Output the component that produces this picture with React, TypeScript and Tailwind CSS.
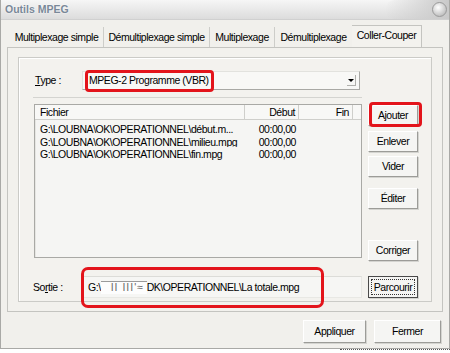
import React from 'react';

const font = "font-['Liberation_Sans',Arial,sans-serif]";

const tabs = [
  { label: 'Multiplexage simple', w: 'w-[94px]' },
  { label: 'Démultiplexage simple', w: 'w-[106px]' },
  { label: 'Multiplexage', w: 'w-[65px]' },
  { label: 'Démultiplexage', w: 'w-[77px]' },
];

const files = [
  { name: 'G:\\LOUBNA\\OK\\OPERATIONNEL\\début.m...', start: '00:00,00' },
  { name: 'G:\\LOUBNA\\OK\\OPERATIONNEL\\milieu.mpg', start: '00:00,00' },
  { name: 'G:\\LOUBNA\\OK\\OPERATIONNEL\\fin.mpg', start: '00:00,00' },
];

const Btn = ({ label, className = '' }: { label: React.ReactNode; className?: string }) => (
  <div
    className={`relative h-[21px] w-[50px] flex items-center justify-center bg-[#f5f5f3] border border-t-white border-l-white border-b-[#9c9c98] border-r-[#9c9c98] shadow-[1px_1px_0_#d4d4d0] ${className}`}
  >
    {label}
  </div>
);

const RedBox = ({ className }: { className: string }) => (
  <div className={`absolute border-[3px] border-[#e3141b] pointer-events-none ${className}`} />
);

export default function App() {
  return (
    <div className={`w-[450px] h-[353px] bg-white overflow-hidden text-[10.5px] tracking-[-0.45px] leading-none text-black whitespace-nowrap ${font}`}>
      <div className="h-[349px] flex flex-col bg-[#f1f0ec] border-x border-b border-[#a9a9a6]">
        {/* title bar */}
        <div className="h-[20px] flex items-center justify-between pl-[4px] bg-gradient-to-b from-[#f6f6f6] to-[#dcdcdc] border-b border-[#d0d0d0]">
          <span className="font-bold text-[10.5px] tracking-normal text-[#7a8898] [text-shadow:0_0_2px_#ffffff]">
            Outils MPEG
          </span>
          <div className="h-full w-[64px] flex items-center justify-end pr-[2px] rounded-l-full bg-gradient-to-r from-transparent to-[#c9c9c9]">
            <div className="w-[15px] h-[15px] rounded-full border border-[#9a9a9a] bg-[radial-gradient(circle_at_40%_35%,#ffffff,#c4c4c4_70%,#a8a8a8)]" />
          </div>
        </div>

        <div className="flex-1 px-[6px] pt-[7px]">
          {/* tabs */}
          <div className="flex h-[20px] pl-[3px]">
            {tabs.map((t, i) => (
              <div
                key={t.label}
                className={`${t.w} h-full flex items-center justify-center ${i < 3 ? 'border-r border-[#cdcdc9]' : ''}`}
              >
                {t.label}
              </div>
            ))}
            <div className="w-[70px] h-[22px] -mt-[2px] flex items-center justify-center pb-[2px] bg-[#f3f2ee] border-r border-t border-[#c4c4c0] relative z-10">
              Coller-Couper
            </div>
          </div>

          {/* tab panel */}
          <div className="h-[265px] border border-[#c4c4c0] bg-[#f2f1ed] pt-[9px] px-[10px]">
            <div className="h-[245px] border border-[#cbcbc7] shadow-[inset_1px_1px_0_#ffffff] bg-[#f3f2ee]">
              {/* type */}
              <div className="flex items-center h-[19px] mt-[13px] pl-[16px]">
                <div className="w-[47px]">
                  <span className="underline">T</span>ype :
                </div>
                <div className="relative w-[278px] h-[19px] flex items-center justify-between bg-[#f8f8f6] border border-t-[#e2e2de] border-l-[#e2e2de] border-r-[#a9a9a5] border-b-[#a9a9a5] pl-[6px] pr-[3px]">
                  <span>MPEG-2 Programme (VBR)</span>
                  <div className="w-[9px] h-[11px] flex items-center justify-center border-r border-b border-[#b0b0ac]">
                    <div className="w-0 h-0 border-l-[3px] border-r-[3px] border-t-[3px] border-l-transparent border-r-transparent border-t-black" />
                  </div>
                  <RedBox className="left-[2px] -top-[2px] w-[129px] h-[22px] rounded-[4px]" />
                </div>
              </div>

              <div className="mt-[7px] ml-[14px] w-[329px] h-px bg-[#d4d4d0]" />

              {/* list + buttons */}
              <div className="flex items-start h-[154px] mt-[6px] pl-[15px]">
                <div className="w-[328px] h-[154px] border border-[#a9a9a5] bg-[#f5f5f3] shadow-[inset_1px_1px_0_#e6e6e2]">
                  <div className="flex h-[15px] border-b border-[#cfcfcb] bg-[#f8f8f6]">
                    <div className="w-[210px] pl-[5px] flex items-center border-r border-[#cfcfcb]">Fichier</div>
                    <div className="w-[54px] pr-[3px] flex items-center justify-end border-r border-[#cfcfcb]">Début</div>
                    <div className="w-[54px] pr-[3px] flex items-center justify-end border-r border-[#cfcfcb]">Fin</div>
                  </div>
                  <div className="mt-[3px]">
                    {files.map((f) => (
                      <div key={f.name} className="flex h-[12.5px] items-center">
                        <div className="w-[210px] pl-[5px] overflow-hidden">{f.name}</div>
                        <div className="w-[54px] pr-[3px] text-right">{f.start}</div>
                      </div>
                    ))}
                  </div>
                </div>
                <div className="ml-[6px] flex flex-col">
                  <div className="relative mt-[1px]">
                    <Btn label="Ajouter" />
                    <RedBox className="left-[1px] -top-[3px] w-[53px] h-[25px] rounded-[4px]" />
                  </div>
                  <Btn label="Enlever" className="mt-[5px]" />
                  <Btn label="Vider" className="mt-[4px]" />
                  <Btn label="Éditer" className="mt-[11px]" />
                  <Btn label="Corriger" className="mt-[31px]" />
                </div>
              </div>

              {/* sortie */}
              <div className="flex items-center h-[22px] mt-[18px] pl-[14px]">
                <div className="w-[49px]">
                  So<span className="underline">r</span>tie :
                </div>
                <div className="relative w-[280px] h-[22px] flex items-center pl-[5px] bg-[#f6f6f4] border border-t-[#dcdcd8] border-l-[#dcdcd8] border-r-[#e8e8e4] border-b-[#e8e8e4]">
                  <span>G:\</span>
                  <span className="inline-block w-[46px] h-[13px] bg-[#fdfdfd] text-[#6a6a6a] overflow-hidden border-t border-[#9a9a9a] pl-[10px] tracking-[1px]">
                    II III'≈
                  </span>
                  <span>DK\OPERATIONNEL\La totale.mpg</span>
                  <RedBox className="-left-[2px] -top-[10px] w-[243px] h-[41px] rounded-[7px]" />
                </div>
                <div className="ml-[6px] h-[22px] w-[50px] p-[2px] bg-[#f5f5f3] border border-[#4a4a4a] shadow-[1px_1px_0_#d4d4d0]">
                  <div className="h-full w-full flex items-center justify-center border border-dotted border-[#333]">
                    Parcourir
                  </div>
                </div>
              </div>
            </div>
          </div>

          {/* bottom buttons */}
          <div className="flex justify-end gap-[8px] mt-[8px] pr-[2px]">
            <Btn label="Appliquer" className="w-[63px] h-[23px]" />
            <Btn label="Fermer" className="w-[67px] h-[23px]" />
          </div>
        </div>
      </div>
      <div className="flex justify-end">
        <div className="w-[110px] h-[4px] border-t border-dotted border-[#555]" />
      </div>
    </div>
  );
}
